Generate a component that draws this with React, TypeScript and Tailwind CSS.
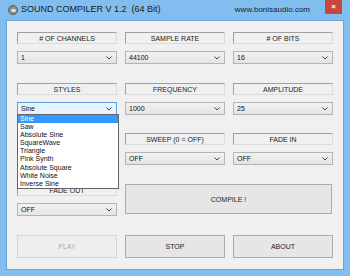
import React from 'react'

const Label = ({ text }: { text: string }) => (
  <div className="h-[12px] flex items-center justify-center border border-t-[#a0a0a0] border-l-[#a0a0a0] border-b-[#dcdcdc] border-r-[#dcdcdc] text-[7px] text-[#222] leading-none">
    {text}
  </div>
)

const Chevron = () => (
  <svg width="6" height="4" viewBox="0 0 6 4" className="shrink-0">
    <path d="M0.5 0.5 L3 3 L5.5 0.5" fill="none" stroke="#444" strokeWidth="1" />
  </svg>
)

const Select = ({ value, open }: { value: string; open?: boolean }) => (
  <div
    className={
      'h-[13px] flex items-center justify-between pl-[3px] pr-[4px] border text-[7px] leading-none text-[#111] ' +
      (open ? 'border-[#5a9ee0] bg-[#e8f2fc]' : 'border-[#b4b4b4] bg-gradient-to-b from-[#f2f2f2] to-[#e4e4e4]')
    }
  >
    <span>{value}</span>
    <Chevron />
  </div>
)

const Button = ({ text, disabled, tall }: { text: string; disabled?: boolean; tall?: boolean }) => (
  <div
    className={
      'flex items-center justify-center border text-[7px] leading-none ' +
      (tall ? 'h-[30px] ' : 'h-[23px] ') +
      (disabled ? 'border-[#d4d4d4] bg-[#eeeeee] text-[#a8a8a8]' : 'border-[#acacac] bg-[#e6e6e6] text-[#222]')
    }
  >
    {text}
  </div>
)

const styles = ['Sine', 'Saw', 'Absolute Sine', 'SquareWave', 'Triangle', 'Pink Synth', 'Absolute Square', 'White Noise', 'Inverse Sine']

export default function App() {
  return (
    <div className="w-[350px] h-[276px] bg-[#82bdf0] flex flex-col" style={{ fontFamily: '"Liberation Sans", Arial, sans-serif' }}>
      <div className="h-[20px] flex items-center pl-[8px] relative">
        <div className="w-[10px] h-[10px] rounded-full bg-[#8d8d8d] border border-[#5e5e5e] flex items-center justify-center">
          <div className="w-[5px] h-[3px] rounded-full bg-[#e0e0e0]" />
        </div>
        <span className="ml-[3px] text-[9px] text-[#1a1a1a] whitespace-pre">
          SOUND COMPILER V 1.2  (64 Bit)
        </span>
        <span className="ml-auto mr-[40px] text-[8px] text-[#1a1a1a]">
          www.bonisaudio.com
        </span>
        <div className="absolute right-[8px] top-0 w-[17px] h-[14px] bg-[#c7463d] flex items-center justify-center text-white text-[8px] font-bold">
          ×
        </div>
      </div>
      <div className="mx-[6px] h-[250px] bg-[#f0f0f0] border border-[#6aa3d8] pl-[10px] pr-[11px] pt-[11px] flex flex-col">
        <div className="grid grid-cols-[100px_100px_100px] gap-x-[8px]">
          <div className="flex flex-col gap-[7px]">
            <Label text="# OF CHANNELS" />
            <Select value="1" />
          </div>
          <div className="flex flex-col gap-[7px]">
            <Label text="SAMPLE RATE" />
            <Select value="44100" />
          </div>
          <div className="flex flex-col gap-[7px]">
            <Label text="# OF BITS" />
            <Select value="16" />
          </div>
        </div>
        <div className="grid grid-cols-[100px_100px_100px] gap-x-[8px] mt-[19px] relative z-10">
          <div className="flex flex-col gap-[7px] relative">
            <Label text="STYLES" />
            <Select value="Sine" open />
            <div className="absolute left-0 top-[31px] w-[102px] bg-white border border-[#646464] flex flex-col text-[7px] leading-[8.1px] text-[#111]">
              {styles.map((s, i) => (
                <div key={s} className={'pl-[2px] h-[8.1px] ' + (i === 0 ? 'bg-[#3399ff] text-white' : '')}>
                  {s}
                </div>
              ))}
            </div>
          </div>
          <div className="flex flex-col gap-[7px]">
            <Label text="FREQUENCY" />
            <Select value="1000" />
          </div>
          <div className="flex flex-col gap-[7px]">
            <Label text="AMPLITUDE" />
            <Select value="25" />
          </div>
        </div>
        <div className="grid grid-cols-[100px_100px_100px] gap-x-[8px] mt-[18px]">
          <div />
          <div className="flex flex-col gap-[7px]">
            <Label text="SWEEP (0 = OFF)" />
            <Select value="OFF" />
          </div>
          <div className="flex flex-col gap-[7px]">
            <Label text="FADE IN" />
            <Select value="OFF" />
          </div>
        </div>
        <div className="grid grid-cols-[100px_207px] gap-x-[8px] mt-[19px]">
          <div className="flex flex-col gap-[7px]">
            <Label text="FADE OUT" />
            <Select value="OFF" />
          </div>
          <Button text="COMPILE !" tall />
        </div>
        <div className="grid grid-cols-[100px_100px_100px] gap-x-[8px] mt-[19px]">
          <Button text="PLAY" disabled />
          <Button text="STOP" />
          <Button text="ABOUT" />
        </div>
      </div>
    </div>
  )
}
